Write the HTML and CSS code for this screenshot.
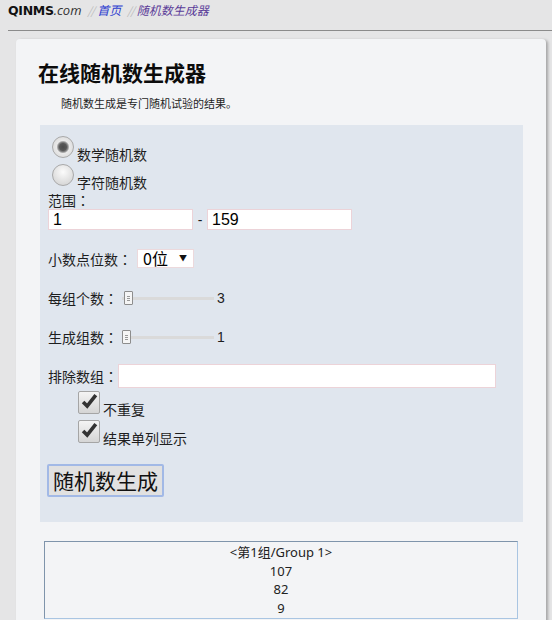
FILE: index.html
```html
<!DOCTYPE html>
<html lang="zh-CN">
<head>
  <meta charset="UTF-8" />
  <meta name="viewport" content="width=device-width, initial-scale=1.0"/>
  <title>在线随机数生成器</title>
  <link rel="stylesheet" href="styles.css">
</head>
<body>
  <div class="crumbs">
    <span class="brand">QINMS<i>.com</i></span><span class="sep">//</span><a class="home" href="#">首页</a><span class="sep">//</span><a class="here" href="#">随机数生成器</a>
  </div>

  <div class="card">
    <h1>在线随机数生成器</h1>
    <p class="intro">随机数生成是专门随机试验的结果。</p>

    <form class="panel" onsubmit="return false">
      <label class="opt"><input type="radio" name="kind" checked><span>数学随机数</span></label>
      <label class="opt"><input type="radio" name="kind"><span>字符随机数</span></label>

      <div class="caption">范围<span class="colon" lang="ja">：</span></div>
      <div class="range">
        <input class="num" type="text" value="1">
        <span class="dash">-</span>
        <input class="num" type="text" value="159">
      </div>

      <div class="row">
        <span>小数点位数<span class="colon" lang="ja">：</span></span>
        <span class="pick">
          <select>
            <option>0位</option>
            <option>1位</option>
            <option>2位</option>
          </select>
        </span>
      </div>

      <div class="row">
        <span>每组个数<span class="colon" lang="ja">：</span></span>
        <input class="slider" type="range" min="1" max="100" value="3">
        <span class="val">3</span>
      </div>

      <div class="row">
        <span>生成组数<span class="colon" lang="ja">：</span></span>
        <input class="slider" type="range" min="1" max="100" value="1">
        <span class="val">1</span>
      </div>

      <div class="row exclude">
        <span>排除数组<span class="colon" lang="ja">：</span></span>
        <input class="wide" type="text">
      </div>

      <label class="chk">
        <span class="box"><svg viewBox="0 0 22 22" width="22" height="22"><path d="M4.5 11 L9 15.5 L18.5 3.5" fill="none" stroke="#333" stroke-width="4"/></svg></span>
        <span>不重复</span>
      </label>
      <label class="chk">
        <span class="box"><svg viewBox="0 0 22 22" width="22" height="22"><path d="M4.5 11 L9 15.5 L18.5 3.5" fill="none" stroke="#333" stroke-width="4"/></svg></span>
        <span>结果单列显示</span>
      </label>

      <button class="go" type="button">随机数生成</button>
    </form>

    <div class="result">
      <div>&lt;第1组/Group 1&gt;</div>
      <div>107</div>
      <div>82</div>
      <div>9</div>
    </div>
  </div>
</body>
</html>
```

FILE: styles.css
```css
body {
  margin: 0;
  background: #e5e5e6;
  color: #1e1e1e;
  font-family: "Noto Sans CJK SC", "Noto Sans", sans-serif;
  overflow: hidden;
}
.crumbs {
  margin-left: 8px;
  height: 30px;
  border-bottom: 1px solid #8b8b8b;
  font-size: 12px;
  line-height: 20px;
  font-style: italic;
}
.brand {
  font-family: "DejaVu Sans", sans-serif;
  font-style: normal;
  font-weight: bold;
  font-size: 12.5px;
  letter-spacing: -0.3px;
  color: #111;
}
.brand i {
  font-weight: normal;
  font-family: "Open Sans", sans-serif;
  font-size: 13px;
  letter-spacing: 0;
  color: #333;
}
.sep {
  color: #bbb;
  font-size: 11px;
  letter-spacing: -1px;
  margin: 0 3px 0 6px;
}
.home {
  color: #2b3ccf;
  text-decoration: none;
}
.here {
  color: #5b3c99;
  text-decoration: none;
}
.card {
  margin: 8px 6px 0 16px;
  padding: 1px 23px 20px 24px;
  background: #f3f4f6;
  border-radius: 4px;
  box-shadow: 2px 1px 3px rgba(0, 0, 0, 0.28);
}
.card h1 {
  margin: 17px 0 0 -2px;
  font-size: 21px;
  line-height: 30px;
  font-weight: bold;
  color: #0c0c0c;
}
.intro {
  margin: 6px 0 12px 21px;
  font-size: 11px;
  line-height: 20px;
}
.colon {
  /* full-width colon drawn centred in its cell */
  font-family: "Noto Sans CJK JP", sans-serif;
  -webkit-locale: "ja";
}
.panel {
  background: #e0e6ee;
  padding: 11px 8px 25px 8px;
  font-size: 14px;
}
.opt {
  display: flex;
  align-items: flex-end;
  height: 25px;
  margin-bottom: 3px;
}
.opt span {
  line-height: 16px;
  margin: 0 0 -1px 3px;
}
.opt input {
  -webkit-appearance: none;
  appearance: none;
  align-self: flex-start;
  width: 22px;
  height: 22px;
  margin: 0 0 0 4px;
  border-radius: 50%;
  border: 1px solid #a9a9a9;
  background: radial-gradient(circle at 50% 35%, #fbfbfb, #d9d9d9 75%);
  box-sizing: border-box;
}
.opt input:checked {
  background: radial-gradient(circle, #4b4b4b 0, #585858 3.5px, #8c8c8c 5px, #e9e9e9 6.5px, #d4d4d4 100%);
}
.caption {
  margin-top: 1px;
  line-height: 17px;
}
.range {
  display: flex;
  align-items: center;
  height: 21px;
}
.num, .wide {
  box-sizing: border-box;
  height: 21px;
  border: 1px solid #ecd3d8;
  background: #fff;
  padding: 0 4px;
  font-family: "Liberation Sans", Arial, sans-serif;
  font-size: 16px;
  color: #000;
  outline: none;
}
.num {
  width: 145px;
}
.dash {
  width: 14px;
  text-align: center;
  font-family: "Liberation Sans", Arial, sans-serif;
  font-size: 14px;
}
.row {
  display: flex;
  align-items: center;
  height: 20px;
  margin-top: 19px;
}
.row.exclude {
  height: 24px;
  margin-top: 17px;
}
.wide {
  width: 378px;
  height: 24px;
}
.pick {
  position: relative;
  margin-left: 5px;
}
.pick select {
  -webkit-appearance: none;
  appearance: none;
  width: 57px;
  height: 19px;
  padding: 0 0 0 5px;
  border: 1px solid #ecd9dc;
  border-radius: 0;
  background: #fff;
  font-family: "Noto Sans CJK SC", sans-serif;
  font-size: 16px;
  line-height: 17px;
  color: #000;
}
.pick::after {
  content: "\25BC";
  position: absolute;
  right: 7px;
  top: 3px;
  font-size: 8px;
  color: #111;
  pointer-events: none;
}
.slider {
  -webkit-appearance: none;
  appearance: none;
  width: 92px;
  height: 16px;
  margin: 0 3px 0 4px;
  background: transparent;
}
.slider::-webkit-slider-runnable-track {
  height: 3px;
  background: #dadada;
}
.slider::-webkit-slider-thumb {
  -webkit-appearance: none;
  width: 9px;
  height: 14px;
  margin-top: -6px;
  border: 1px solid #8d8d8d;
  border-radius: 1px;
  background:
    linear-gradient(#999, #999) 2px 4px / 3px 1px no-repeat,
    linear-gradient(#999, #999) 2px 6px / 3px 1px no-repeat,
    linear-gradient(#999, #999) 2px 8px / 3px 1px no-repeat,
    #f5f5f5;
}
.val {
  font-family: "Liberation Sans", Arial, sans-serif;
  font-size: 14px;
}
.chk {
  display: flex;
  align-items: flex-end;
  height: 25px;
  margin: 3px 0 0 30px;
}
.chk + .chk {
  margin-top: 4px;
}
.chk .box {
  align-self: flex-start;
  box-sizing: border-box;
  width: 22px;
  height: 23px;
  border: 1px solid #a5a5a5;
  border-radius: 2px;
  background: linear-gradient(#f4f4f4, #d5d5d5);
  display: flex;
}
.chk .box svg {
  margin: -1px 0 0 0;
}
.chk span + span {
  line-height: 16px;
  margin: 0 0 -1px 3px;
}
.go {
  display: block;
  margin-top: 19px;
  margin-left: -1px;
  height: 33px;
  padding: 0 4px;
  border: 2px solid #a2b9e6;
  border-radius: 2px;
  background: #e1e1e1;
  font-family: "Noto Sans CJK SC", sans-serif;
  font-size: 21px;
  line-height: 27px;
  color: #111;
}
.result {
  margin: 19px 5px 0 4px;
  border: 1px solid;
  border-color: #7f94ab #a9c5e2 #a9c5e2 #7f94ab;
  padding-top: 1px;
  text-align: center;
  font-family: "Noto Sans", "Noto Sans CJK SC", sans-serif;
  font-size: 13px;
  line-height: 18.7px;
  color: #222;
}
```
